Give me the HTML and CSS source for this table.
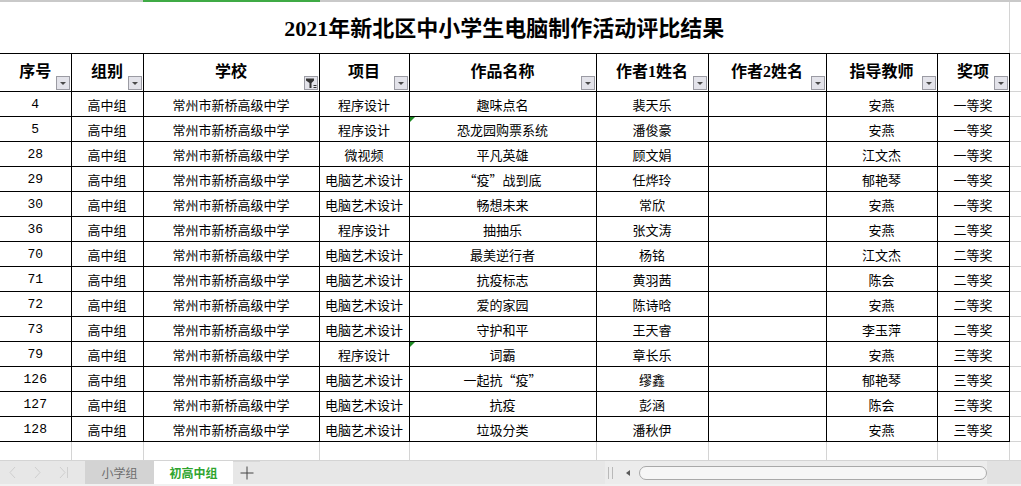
FILE: index.html
```html
<!DOCTYPE html>
<html lang="zh-CN">
<head>
<meta charset="utf-8">
<title>2021年新北区中小学生电脑制作活动评比结果</title>
<link rel="stylesheet" href="styles.css">
</head>
<body>
<div class="sheet">
  <div class="colbar"><div class="colbar-sel"></div></div>
  <table class="grid">
    <colgroup>
      <col class="c1"><col class="c2"><col class="c3"><col class="c4"><col class="c5"><col class="c6"><col class="c7"><col class="c8"><col class="c9"><col class="cf">
    </colgroup>
    <tr class="r-title">
      <td colspan="9" class="title">2021年新北区中小学生电脑制作活动评比结果</td>
      <td class="fill"></td>
    </tr>
    <tr class="r-head">
      <th>序号<span class="fbtn"><i></i></span></th>
      <th>组别<span class="fbtn"><i></i></span></th>
      <th>学校<span class="fbtn on"><svg width="12" height="12" viewBox="0 0 12 12"><path d="M1 1.5h8v2l-2.5 2.5v5h-2v-5l-3.5-2.5z" fill="#333"/><path d="M8.5 8.5h3M8.5 10.5h3" stroke="#333" stroke-width="1"/></svg></span></th>
      <th>项目<span class="fbtn"><i></i></span></th>
      <th>作品名称<span class="fbtn"><i></i></span></th>
      <th>作者1姓名<span class="fbtn"><i></i></span></th>
      <th>作者2姓名<span class="fbtn"><i></i></span></th>
      <th>指导教师<span class="fbtn"><i></i></span></th>
      <th>奖项<span class="fbtn"><i></i></span></th>
      <td class="fill"></td>
    </tr>
    <tr><td class="num">4</td><td>高中组</td><td>常州市新桥高级中学</td><td>程序设计</td><td>趣味点名</td><td>裴天乐</td><td></td><td>安燕</td><td>一等奖</td><td class="fill"></td></tr>
    <tr><td class="num">5</td><td>高中组</td><td>常州市新桥高级中学</td><td>程序设计</td><td class="mark">恐龙园购票系统</td><td>潘俊豪</td><td></td><td>安燕</td><td>一等奖</td><td class="fill"></td></tr>
    <tr><td class="num">28</td><td>高中组</td><td>常州市新桥高级中学</td><td>微视频</td><td>平凡英雄</td><td>顾文娟</td><td></td><td>江文杰</td><td>一等奖</td><td class="fill"></td></tr>
    <tr><td class="num">29</td><td>高中组</td><td>常州市新桥高级中学</td><td>电脑艺术设计</td><td>“疫”战到底</td><td>任烨玲</td><td></td><td>郁艳琴</td><td>一等奖</td><td class="fill"></td></tr>
    <tr><td class="num">30</td><td>高中组</td><td>常州市新桥高级中学</td><td>电脑艺术设计</td><td>畅想未来</td><td>常欣</td><td></td><td>安燕</td><td>一等奖</td><td class="fill"></td></tr>
    <tr><td class="num">36</td><td>高中组</td><td>常州市新桥高级中学</td><td>程序设计</td><td>抽抽乐</td><td>张文涛</td><td></td><td>安燕</td><td>二等奖</td><td class="fill"></td></tr>
    <tr><td class="num">70</td><td>高中组</td><td>常州市新桥高级中学</td><td>电脑艺术设计</td><td>最美逆行者</td><td>杨铭</td><td></td><td>江文杰</td><td>二等奖</td><td class="fill"></td></tr>
    <tr><td class="num">71</td><td>高中组</td><td>常州市新桥高级中学</td><td>电脑艺术设计</td><td>抗疫标志</td><td>黄羽茜</td><td></td><td>陈会</td><td>二等奖</td><td class="fill"></td></tr>
    <tr><td class="num">72</td><td>高中组</td><td>常州市新桥高级中学</td><td>电脑艺术设计</td><td>爱的家园</td><td>陈诗晗</td><td></td><td>安燕</td><td>二等奖</td><td class="fill"></td></tr>
    <tr><td class="num">73</td><td>高中组</td><td>常州市新桥高级中学</td><td>电脑艺术设计</td><td>守护和平</td><td>王天睿</td><td></td><td>李玉萍</td><td>二等奖</td><td class="fill"></td></tr>
    <tr><td class="num">79</td><td>高中组</td><td>常州市新桥高级中学</td><td>程序设计</td><td class="mark">词霸</td><td>章长乐</td><td></td><td>安燕</td><td>三等奖</td><td class="fill"></td></tr>
    <tr><td class="num">126</td><td>高中组</td><td>常州市新桥高级中学</td><td>电脑艺术设计</td><td>一起抗“疫”</td><td>缪鑫</td><td></td><td>郁艳琴</td><td>三等奖</td><td class="fill"></td></tr>
    <tr><td class="num">127</td><td>高中组</td><td>常州市新桥高级中学</td><td>电脑艺术设计</td><td>抗疫</td><td>彭涵</td><td></td><td>陈会</td><td>三等奖</td><td class="fill"></td></tr>
    <tr><td class="num">128</td><td>高中组</td><td>常州市新桥高级中学</td><td>电脑艺术设计</td><td>垃圾分类</td><td>潘秋伊</td><td></td><td>安燕</td><td>三等奖</td><td class="fill"></td></tr>
    <tr class="r-empty"><td></td><td></td><td></td><td></td><td></td><td></td><td></td><td></td><td></td><td class="fill"></td></tr>
    <tr class="r-empty"><td></td><td></td><td></td><td></td><td></td><td></td><td></td><td></td><td></td><td class="fill"></td></tr>
  </table>
</div>
<div class="tabbar">
  <div class="nav">
    <svg width="85" height="23" viewBox="0 0 85 23">
      <polyline points="15,6 10,11.5 15,17" fill="none" stroke="#cfcfcf" stroke-width="1"/>
      <polyline points="35,6 40,11.5 35,17" fill="none" stroke="#cfcfcf" stroke-width="1"/>
      <polyline points="60,6 65,11.5 60,17" fill="none" stroke="#cfcfcf" stroke-width="1"/>
      <line x1="67.5" y1="6" x2="67.5" y2="17" stroke="#cfcfcf" stroke-width="1"/>
    </svg>
  </div>
  <div class="tab">小学组</div>
  <div class="tab active">初高中组</div>
  <div class="plus">
    <svg width="14" height="14" viewBox="0 0 14 14"><path d="M7 0.5v13M0.5 7h13" stroke="#444" stroke-width="1"/></svg>
  </div>
  <div class="spacer"></div>
  <div class="scroll">
    <span class="grip"></span>
    <span class="arrow"></span>
    <span class="thumb"></span>
  </div>
  <div class="scroll-end"></div>
</div>
<div class="foot"></div>
</body>
</html>
```
FILE: styles.css
```css
html, body {
  margin: 0;
  padding: 0;
  background: #ffffff;
}
body {
  width: 1021px;
  height: 486px;
  overflow: hidden;
  font-family: "Noto Sans CJK SC", sans-serif;
}
.sheet {
  height: 461px;
  overflow: hidden;
}
.colbar {
  height: 2px;
  background: #c9c9c9;
}
.colbar-sel {
  margin-left: 143px;
  width: 177px;
  height: 2px;
  background: #3faa45;
}
.grid {
  border-collapse: collapse;
  table-layout: fixed;
  width: 1021px;
}
.c1 { width: 71px; }
.c2 { width: 72px; }
.c3 { width: 176px; }
.c4 { width: 90px; }
.c5 { width: 187px; }
.c6 { width: 112px; }
.c7 { width: 118px; }
.c8 { width: 111px; }
.c9 { width: 72px; }
.cf { width: 12px; }

.grid td, .grid th {
  border: 1px solid #000;
  padding: 0;
  text-align: center;
  vertical-align: middle;
  position: relative;
  white-space: nowrap;
  overflow: visible;
}
.grid tr > :first-child {
  border-left: none;
}
.grid .fill {
  border: 1px solid #d4d4d4;
  border-right: none;
}
.r-title td.title {
  border-top: none;
  border-left: none;
  border-right: none;
  height: 51px;
  padding-top: 3px;
  box-sizing: border-box;
  font-family: "Liberation Serif", "Noto Sans CJK SC", serif;
  font-weight: bold;
  font-size: 22px;
  line-height: 24px;
  color: #000;
}
.r-title td.fill {
  border-top: none;
}
.r-head th {
  height: 37px;
  font-family: "Liberation Serif", "Noto Sans CJK SC", serif;
  font-weight: bold;
  font-size: 16px;
  line-height: 18px;
  color: #000;
}
.grid tr:not(.r-title):not(.r-head):not(.r-empty) td {
  height: 25px;
  padding-top: 2px;
  box-sizing: border-box;
  font-size: 13px;
  line-height: 15px;
  color: #000;
}
.grid td.num {
  font-family: "Liberation Mono", monospace;
  font-size: 11px;
}
.r-empty td {
  height: 18px;
  border: 1px solid #d4d4d4;
}
.fbtn {
  position: absolute;
  right: 1px;
  bottom: 1px;
  width: 12px;
  height: 12px;
  border: 1px solid #9b9ba3;
  background: #e3e3ea;
  display: flex;
  align-items: center;
  justify-content: center;
}
.fbtn i {
  display: block;
  width: 0;
  height: 0;
  margin-top: 2px;
  border-left: 3px solid transparent;
  border-right: 3px solid transparent;
  border-top: 3px solid #4a4a4a;
}
.fbtn.on svg {
  display: block;
}
.mark::before {
  content: "";
  position: absolute;
  left: 0;
  top: 0;
  width: 0;
  height: 0;
  border-top: 5px solid #1f8b24;
  border-right: 5px solid transparent;
}
.tabbar {
  height: 23px;
  display: flex;
  align-items: stretch;
  background: #e7e7e7;
}
.nav {
  width: 85px;
  flex: none;
}
.nav svg {
  display: block;
}
.tab {
  flex: none;
  display: flex;
  align-items: center;
  justify-content: center;
  font-size: 12px;
  line-height: 14px;
}
.tab:not(.active) {
  width: 69px;
  background: #d3d3d3;
  color: #6e6e6e;
}
.tab.active {
  width: 79px;
  background: #ffffff;
  color: #2fa52f;
  font-weight: bold;
}
.plus {
  width: 27px;
  flex: none;
  display: flex;
  align-items: center;
  justify-content: center;
  border-top: 1px solid #d8d8d8;
  box-sizing: border-box;
}
.plus svg {
  display: block;
}
.spacer {
  flex: 1;
}
.scroll {
  width: 382px;
  flex: none;
  display: flex;
  align-items: center;
  background: #ececec;
}
.grip {
  width: 3px;
  height: 12px;
  border-left: 1px solid #b9b9b9;
  border-right: 1px solid #b9b9b9;
  margin-left: 3px;
}
.arrow {
  width: 0;
  height: 0;
  margin-left: 13px;
  border-top: 3px solid transparent;
  border-bottom: 3px solid transparent;
  border-right: 4px solid #5a5a5a;
}
.thumb {
  margin-left: 9px;
  width: 347px;
  height: 12px;
  border: 1px solid #a9a9a9;
  border-radius: 7px;
  background: #f6f6f6;
}
.scroll-end {
  width: 34px;
  flex: none;
  background: #e2e2e2;
}
.foot {
  height: 2px;
  background: #f1f1f1;
}
```
